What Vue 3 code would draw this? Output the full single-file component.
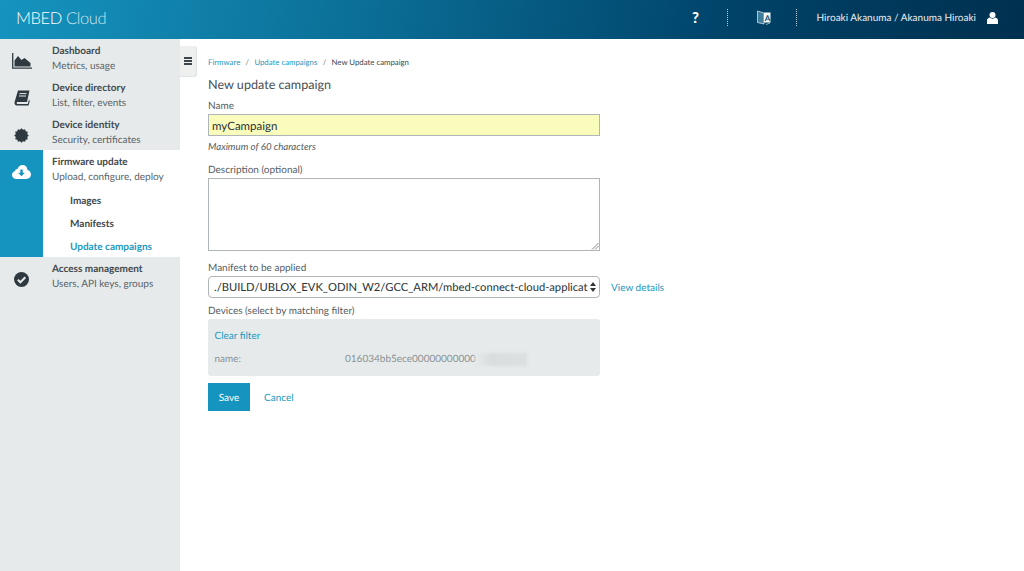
<script setup>
const navTop = [
  { title: 'Dashboard', sub: 'Metrics, usage', icon: 'chart' },
  { title: 'Device directory', sub: 'List, filter, events', icon: 'book' },
  { title: 'Device identity', sub: 'Security, certificates', icon: 'badge' }
]
const scallop = Array.from({ length: 24 }, (_, i) => {
  const a = (i / 24) * Math.PI * 2
  const r = i % 2 ? 5.9 : 7.3
  return `${(7.5 + r * Math.cos(a)).toFixed(2)},${(7.5 + r * Math.sin(a)).toFixed(2)}`
}).join(' ')
</script>

<template>
  <div class="page">
    <header class="topbar">
      <div class="logo"><span class="logo-a">MBED</span> <span class="logo-b">Cloud</span></div>
      <div class="top-right">
        <span class="help">?</span>
        <span class="dots"></span>
        <svg class="lang" width="14" height="15" viewBox="0 0 14 15">
          <path d="M0.5 1 L7 3 V14 L0.5 12.5 Z" fill="#3f7d9b" stroke="#cfe0e8" stroke-width=".8"/>
          <path d="M7 2.5 H13.5 V12.5 H7 Z" fill="#f4f8fa"/>
          <path d="M9 14.5 L13 13" stroke="#cfe0e8" stroke-width=".7"/>
          <text x="7.8" y="10.6" font-size="8" font-weight="700" fill="#0b4a6c" font-family="Lato">A</text>
        </svg>
        <span class="dots"></span>
        <span class="user">Hiroaki Akanuma / Akanuma Hiroaki</span>
        <svg class="person" width="11" height="12" viewBox="0 0 11 12">
          <circle cx="5.5" cy="3" r="3" fill="#fff"/>
          <path d="M0 12 V8.6 C0 6.8 1.4 6 2.6 5.6 C4.4 7 6.6 7 8.4 5.6 C9.6 6 11 6.8 11 8.6 V12 Z" fill="#fff"/>
        </svg>
      </div>
    </header>

    <div class="body">
      <aside class="sidebar">
        <div v-for="n in navTop" :key="n.title" class="nav-item">
          <div class="nav-icon">
            <svg v-if="n.icon === 'chart'" width="20" height="16" viewBox="0 0 20 16">
              <path d="M0.7 0 V15.2 H20" fill="none" stroke="#2f3a40" stroke-width="1.3"/>
              <path d="M2.5 13.5 V7.5 L6 3 L9.5 7 L12.5 5 L18.5 10 V13.5 Z" fill="#2f3a40"/>
            </svg>
            <svg v-else-if="n.icon === 'book'" width="16" height="16" viewBox="0 0 16 16">
              <path d="M4 0.5 H15.5 L13 12 H3.5 C2.5 12 2.4 14 3.4 14 H13.8 L15 9.5 L15.7 11 L14.6 15.5 H3 C0.8 15.5 0.2 13.6 0.6 12 Z" fill="#2f3a40"/>
              <path d="M5.5 3.6 H12.5 M5 6 H12" stroke="#e6eaea" stroke-width="1"/>
            </svg>
            <svg v-else width="15" height="15" viewBox="0 0 15 15">
              <polygon :points="scallop" fill="#2f3a40"/>
            </svg>
          </div>
          <div class="nav-text">
            <div class="nav-title">{{ n.title }}</div>
            <div class="nav-sub">{{ n.sub }}</div>
          </div>
        </div>

        <div class="nav-active">
          <div class="active-icon">
            <svg width="19" height="14" viewBox="0 0 19 14">
              <path d="M4.5 14 C1.8 14 0 12.3 0 10 C0 8.2 1.1 6.8 2.8 6.3 C2.9 4.8 4.1 3.8 5.5 4 C6.5 1.6 8.3 0 10.6 0 C13.3 0 15.3 2 15.4 4.8 C17.5 5.4 19 7.2 19 9.6 C19 12.2 17 14 14.4 14 Z" fill="#fff"/>
              <path d="M8.3 4.5 H10.7 V7.8 H12.8 L9.5 11.2 L6.2 7.8 H8.3 Z" fill="#1594bf"/>
            </svg>
          </div>
          <div class="active-body">
            <div class="nav-title">Firmware update</div>
            <div class="nav-sub">Upload, configure, deploy</div>
            <div class="subnav">Images</div>
            <div class="subnav">Manifests</div>
            <div class="subnav current">Update campaigns</div>
          </div>
        </div>

        <div class="nav-item last">
          <div class="nav-icon">
            <svg width="15" height="15" viewBox="0 0 15 15">
              <circle cx="7.5" cy="7.5" r="7.5" fill="#2f3a40"/>
              <path d="M3.8 7.7 L6.4 10.3 L11.3 5.3" fill="none" stroke="#e6eaea" stroke-width="2"/>
            </svg>
          </div>
          <div class="nav-text">
            <div class="nav-title">Access management</div>
            <div class="nav-sub">Users, API keys, groups</div>
          </div>
        </div>
      </aside>

      <button class="toggle" type="button" aria-label="Toggle">
        <span></span><span></span><span></span>
      </button>

      <main class="content">
        <nav class="crumbs">
          <a>Firmware</a><i>/</i><a>Update campaigns</a><i>/</i><b>New Update campaign</b>
        </nav>
        <h1>New update campaign</h1>

        <label class="lbl">Name</label>
        <div class="name-input">myCampaign</div>
        <div class="hint">Maximum of 60 characters</div>

        <label class="lbl desc-lbl">Description (optional)</label>
        <div class="textarea">
          <svg class="grip" width="8" height="8" viewBox="0 0 8 8">
            <path d="M1 7.5 L7.5 1 M4 7.5 L7.5 4" stroke="#888" stroke-width="1"/>
          </svg>
        </div>

        <label class="lbl man-lbl">Manifest to be applied</label>
        <div class="select-row">
          <div class="select">
            <span class="select-text">./BUILD/UBLOX_EVK_ODIN_W2/GCC_ARM/mbed-connect-cloud-applicat</span>
            <svg width="6" height="10" viewBox="0 0 6 10">
              <path d="M3 0 L6 4 H0 Z M3 10 L0 6 H6 Z" fill="#333"/>
            </svg>
          </div>
          <a class="details">View details</a>
        </div>

        <label class="lbl dev-lbl">Devices (select by matching filter)</label>
        <div class="filter">
          <a class="clear">Clear filter</a>
          <div class="filter-row">
            <span class="f-key">name:</span>
            <span class="f-val">016034bb5ece00000000000<span class="blur"></span></span>
          </div>
        </div>

        <div class="actions">
          <button class="save" type="button">Save</button>
          <a class="cancel">Cancel</a>
        </div>
      </main>
    </div>
  </div>
</template>

<style>
html, body { margin: 0; background: #fff; }
</style>

<style scoped>
.page {
  width: 1024px;
  height: 571px;
  overflow: hidden;
  font-family: Lato, sans-serif;
  text-rendering: geometricPrecision;
  color: #3d464b;
  display: flex;
  flex-direction: column;
}
.topbar {
  height: 39px;
  flex: none;
  background: linear-gradient(100deg, #1594bf 0%, #0b6f97 35%, #004268 72%, #00304f 100%);
  display: flex;
  align-items: center;
  justify-content: space-between;
  color: #fff;
  box-sizing: border-box;
}
.logo { padding-left: 16px; font-size: 16.5px; letter-spacing: -.4px; margin-top: -3px; font-weight: 300; }
.logo-a { font-weight: 300; }
.logo-b { font-weight: 300; color: #cde4ee; }
.top-right { display: flex; align-items: center; margin-top: -4px; }
.help { font-size: 15px; font-weight: 900; width: 10px; text-align: center; margin-right: 26px; }
.dots { width: 0; height: 17px; border-left: 1px dotted #b9cdd7; }
.lang { margin: 0 25px 0 29px; }
.user { font-size: 10px; color: #e8eef1; margin-left: 20px; }
.person { margin: 0 26px 0 11px; }
.body { flex: 1; display: flex; min-height: 0; position: relative; }
.sidebar { width: 180px; flex: none; background: #e6eaea; box-sizing: border-box; }
.nav-item { display: flex; height: 37px; align-items: center; }
.nav-icon { width: 43px; flex: none; display: flex; justify-content: center; align-items: center; padding-top: 7px; }
.nav-text { padding: 3px 0 0 9px; }
.last .nav-text { padding-top: 2px; }
.nav-title { font-size: 10px; font-weight: 700; line-height: 15px; color: #41494e; }
.nav-sub { font-size: 10px; line-height: 15px; color: #5a6368; }
.nav-active { display: flex; height: 107px; background: #fff; }
.active-icon { width: 43px; flex: none; background: #1594bf; display: flex; justify-content: center; padding-top: 15px; box-sizing: border-box; }
.active-body { padding: 5px 0 0 9px; }
.subnav { font-size: 10px; font-weight: 700; line-height: 15px; margin: 8px 0 0 18px; color: #41494e; }
.nav-sub + .subnav { margin-top: 9px; }
.subnav.current { color: #2199c2; }
.toggle {
  position: absolute;
  left: 180px;
  top: 7px;
  width: 17px;
  height: 31px;
  padding: 0;
  border: 0;
  border-right: 1px solid #dfe3e3;
  border-bottom: 1px solid #dfe3e3;
  border-radius: 0 3px 3px 0;
  background: #eef0f0;
  display: flex;
  flex-direction: column;
  align-items: center;
  justify-content: center;
  gap: 1.5px;
}
.toggle span { width: 8px; height: 1.6px; background: #3d464b; }
.content { flex: 1; padding: 18px 0 0 28px; min-width: 0; }
.crumbs { font-size: 7.8px; line-height: 11px; color: #3d464b; }
.crumbs a { color: #2199c2; }
.crumbs i { font-style: normal; margin: 0 5.3px; color: #777; }
.crumbs b { font-weight: 400; }
h1 { font-size: 12.6px; font-weight: 400; line-height: 18px; margin: 8px 0 0; color: #484f54; }
.lbl { display: block; font-size: 10px; line-height: 14px; color: #555d62; }
h1 + .lbl { margin-top: 5px; }
.name-input {
  width: 392px;
  height: 22px;
  margin-top: 1px;
  box-sizing: border-box;
  background: #fafcbc;
  border: 1px solid #aeb6b8;
  font-size: 11.5px;
  line-height: 23px;
  padding-left: 3px;
  color: #2b3236;
}
.hint { font-size: 9.7px; font-style: italic; line-height: 12px; margin-top: 5px; color: #555d62; }
.desc-lbl { margin-top: 10px; }
.textarea {
  width: 392px;
  height: 73px;
  margin-top: 1px;
  box-sizing: border-box;
  border: 1px solid #aeb6b8;
  position: relative;
  background: #fff;
}
.grip { position: absolute; right: 0; bottom: 0; }
.man-lbl { margin-top: 10px; }
.select-row { display: flex; align-items: center; margin-top: 1px; }
.select {
  width: 392px;
  height: 22px;
  box-sizing: border-box;
  border: 1px solid #aeb6b8;
  border-radius: 4px;
  display: flex;
  align-items: center;
  justify-content: space-between;
  padding: 0 3px 0 5px;
  background: #fff;
}
.select-text { font-size: 11.2px; color: #2b3236; white-space: nowrap; overflow: hidden; width: 375px; }
.details { font-size: 10px; color: #2199c2; margin-left: 11px; padding-top: 1px; }
.dev-lbl { margin-top: 6px; }
.filter {
  width: 392px;
  height: 57px;
  margin-top: 1px;
  box-sizing: border-box;
  background: #e6eaea;
  border-radius: 3px;
  padding: 10px 7px 0 6.5px;
}
.clear { display: block; font-size: 10px; line-height: 14px; color: #2199c2; }
.filter-row { display: flex; margin-top: 9px; font-size: 10px; line-height: 14px; color: #8b9295; }
.f-key { width: 130.5px; flex: none; }
.f-val { display: flex; align-items: center; }
.blur { display: inline-block; width: 52px; height: 13px; margin-left: -1px; background: linear-gradient(90deg, #e6eaea, #d9dddd 30%, #dcdfdf 100%); filter: blur(1.5px); }
.actions { display: flex; align-items: center; margin-top: 7px; }
.save {
  width: 42px;
  height: 28px;
  padding: 1px 0 0;
  border: 0;
  background: #1594bf;
  color: #fff;
  font-family: Lato, sans-serif;
  text-rendering: geometricPrecision;
  font-size: 10px;
}
.cancel { font-size: 10px; color: #2199c2; margin-left: 14px; padding-top: 1px; }
</style>
